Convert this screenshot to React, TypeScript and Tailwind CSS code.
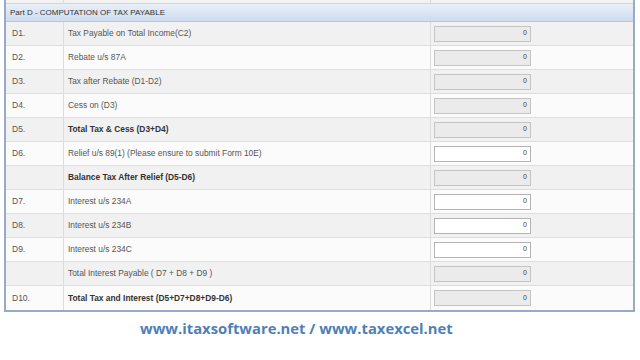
import React from "react";

type Row = { code: string; label: string; bold?: boolean; editable?: boolean };

const rows: Row[] = [
  { code: "D1.", label: "Tax Payable on Total Income(C2)" },
  { code: "D2.", label: "Rebate u/s 87A" },
  { code: "D3.", label: "Tax after Rebate (D1-D2)" },
  { code: "D4.", label: "Cess on (D3)" },
  { code: "D5.", label: "Total Tax & Cess (D3+D4)", bold: true },
  { code: "D6.", label: "Relief u/s 89(1) (Please ensure to submit Form 10E)", editable: true },
  { code: "", label: "Balance Tax After Relief (D5-D6)", bold: true },
  { code: "D7.", label: "Interest u/s 234A", editable: true },
  { code: "D8.", label: "Interest u/s 234B", editable: true },
  { code: "D9.", label: "Interest u/s 234C", editable: true },
  { code: "", label: "Total Interest Payable ( D7 + D8 + D9 )" },
  { code: "D10.", label: "Total Tax and Interest (D5+D7+D8+D9-D6)", bold: true },
];

export default function App() {
  return (
    <div
      className="w-[640px] h-[360px] bg-white overflow-hidden"
      style={{ fontFamily: "'Liberation Sans', Arial, sans-serif" }}
    >
      <div className="ml-[4px] w-[631px] border-x-2 border-b-2 border-[#98abc4]">
        <div className="h-[4px] bg-[#f2f2f2] border-b border-[#d6d6d6] grid grid-cols-[58px_367px_1fr]">
          <div className="border-r border-[#dcdcdc]" />
          <div className="border-r border-[#dcdcdc]" />
          <div />
        </div>
        <div className="h-[18px] flex items-center pl-[4px] text-[8px] text-[#333] bg-gradient-to-b from-[#e9eff7] to-[#cddcee] border-b border-[#b7c8de]">
          Part D - COMPUTATION OF TAX PAYABLE
        </div>
        {rows.map((r, i) => (
          <div
            key={i}
            className={
              "h-[24px] grid grid-cols-[58px_367px_1fr] border-b border-[#dedede] last:border-b-0 " +
              (i % 2 === 0 ? "bg-[#f1f1f1]" : "bg-[#fbfbfb]")
            }
          >
            <div className="flex items-center pl-[6px] text-[8.5px] text-[#555] border-r border-[#dcdcdc]">
              {r.code}
            </div>
            <div
              className={
                "flex items-center pl-[4px] text-[8.4px] border-r border-[#dcdcdc] " +
                (r.bold ? "font-bold text-[#333]" : "text-[#555]")
              }
            >
              {r.label}
            </div>
            <div className="flex items-center pl-[3px]">
              <div
                className={
                  "w-[97px] h-[16px] flex items-center justify-end pr-[3px] text-[7px] text-[#444] border " +
                  (r.editable
                    ? "bg-white border-[#b4b4b4]"
                    : "bg-[#ebebeb] border-[#c4c4c4]")
                }
              >
                0
              </div>
            </div>
          </div>
        ))}
      </div>
      <div
        className="mt-[9px] ml-[140px] text-[14.8px] font-bold text-[#4f7fb8] leading-none"
        style={{ fontFamily: "'Open Sans', sans-serif" }}
      >
        www.itaxsoftware.net / www.taxexcel.net
      </div>
    </div>
  );
}
